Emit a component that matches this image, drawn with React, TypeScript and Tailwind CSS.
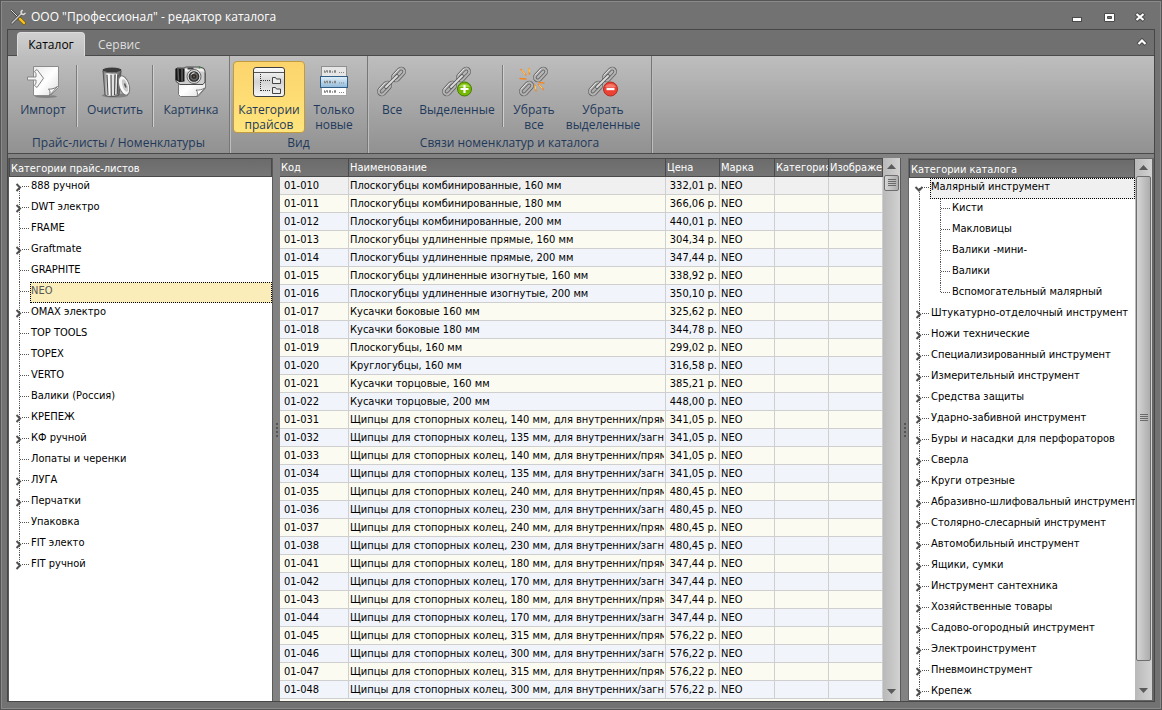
import { useState } from "react";
import type { ReactNode } from "react";

interface TreeItem {
  name: string;
  expandable?: boolean;
  children?: string[];
}

interface Product {
  code: string;
  name: string;
  price: string;
}

const priceLists: TreeItem[] = [
  { name: "888 ручной", expandable: true },
  { name: "DWT электро", expandable: true },
  { name: "FRAME" },
  { name: "Graftmate", expandable: true },
  { name: "GRAPHITE" },
  { name: "NEO" },
  { name: "OMAX электро", expandable: true },
  { name: "TOP TOOLS" },
  { name: "TOPEX" },
  { name: "VERTO" },
  { name: "Валики (Россия)" },
  { name: "КРЕПЕЖ", expandable: true },
  { name: "КФ ручной", expandable: true },
  { name: "Лопаты и черенки" },
  { name: "ЛУГА", expandable: true },
  { name: "Перчатки", expandable: true },
  { name: "Упаковка" },
  { name: "FIT электо", expandable: true },
  { name: "FIT ручной", expandable: true },
];

const catalog: TreeItem[] = [
  {
    name: "Малярный инструмент",
    expandable: true,
    children: ["Кисти", "Макловицы", "Валики -мини-", "Валики", "Вспомогательный малярный"],
  },
  { name: "Штукатурно-отделочный инструмент", expandable: true },
  { name: "Ножи технические", expandable: true },
  { name: "Специализированный инструмент", expandable: true },
  { name: "Измерительный инструмент", expandable: true },
  { name: "Средства защиты", expandable: true },
  { name: "Ударно-забивной инструмент", expandable: true },
  { name: "Буры и насадки для перфораторов", expandable: true },
  { name: "Сверла", expandable: true },
  { name: "Круги отрезные", expandable: true },
  { name: "Абразивно-шлифовальный инструмент", expandable: true },
  { name: "Столярно-слесарный инструмент", expandable: true },
  { name: "Автомобильный инструмент", expandable: true },
  { name: "Ящики, сумки", expandable: true },
  { name: "Инструмент сантехника", expandable: true },
  { name: "Хозяйственные товары", expandable: true },
  { name: "Садово-огородный инструмент", expandable: true },
  { name: "Электроинструмент", expandable: true },
  { name: "Пневмоинструмент", expandable: true },
  { name: "Крепеж", expandable: true },
];

const products: Product[] = [
  { code: "01-010", name: "Плоскогубцы комбинированные, 160 мм", price: "332,01 р." },
  { code: "01-011", name: "Плоскогубцы комбинированные, 180 мм", price: "366,06 р." },
  { code: "01-012", name: "Плоскогубцы комбинированные, 200 мм", price: "440,01 р." },
  { code: "01-013", name: "Плоскогубцы удлиненные прямые, 160 мм", price: "304,34 р." },
  { code: "01-014", name: "Плоскогубцы удлиненные прямые, 200 мм", price: "347,44 р." },
  { code: "01-015", name: "Плоскогубцы удлиненные изогнутые, 160 мм", price: "338,92 р." },
  { code: "01-016", name: "Плоскогубцы удлиненные изогнутые, 200 мм", price: "350,10 р." },
  { code: "01-017", name: "Кусачки боковые 160 мм", price: "325,62 р." },
  { code: "01-018", name: "Кусачки боковые 180 мм", price: "344,78 р." },
  { code: "01-019", name: "Плоскогубцы, 160 мм", price: "299,02 р." },
  { code: "01-020", name: "Круглогубцы, 160 мм", price: "316,58 р." },
  { code: "01-021", name: "Кусачки торцовые, 160 мм", price: "385,21 р." },
  { code: "01-022", name: "Кусачки торцовые, 200 мм", price: "448,00 р." },
  { code: "01-031", name: "Щипцы для стопорных колец, 140 мм, для внутренних/прямы", price: "341,05 р." },
  { code: "01-032", name: "Щипцы для стопорных колец, 135 мм, для внутренних/загнут", price: "341,05 р." },
  { code: "01-033", name: "Щипцы для стопорных колец, 140 мм, для внутренних/прямы", price: "341,05 р." },
  { code: "01-034", name: "Щипцы для стопорных колец, 135 мм, для внутренних/загнут", price: "341,05 р." },
  { code: "01-035", name: "Щипцы для стопорных колец, 240 мм, для внутренних/прямы", price: "480,45 р." },
  { code: "01-036", name: "Щипцы для стопорных колец, 230 мм, для внутренних/загнут", price: "480,45 р." },
  { code: "01-037", name: "Щипцы для стопорных колец, 240 мм, для внутренних/прямы", price: "480,45 р." },
  { code: "01-038", name: "Щипцы для стопорных колец, 230 мм, для внутренних/загнут", price: "480,45 р." },
  { code: "01-041", name: "Щипцы для стопорных колец, 180 мм, для внутренних/прямы", price: "347,44 р." },
  { code: "01-042", name: "Щипцы для стопорных колец, 170 мм, для внутренних/загнут", price: "347,44 р." },
  { code: "01-043", name: "Щипцы для стопорных колец, 180 мм, для внутренних/прямы", price: "347,44 р." },
  { code: "01-044", name: "Щипцы для стопорных колец, 170 мм, для внутренних/загнут", price: "347,44 р." },
  { code: "01-045", name: "Щипцы для стопорных колец, 315 мм, для внутренних/прямы", price: "576,22 р." },
  { code: "01-046", name: "Щипцы для стопорных колец, 300 мм, для внутренних/загнут", price: "576,22 р." },
  { code: "01-047", name: "Щипцы для стопорных колец, 315 мм, для внутренних/прямы", price: "576,22 р." },
  { code: "01-048", name: "Щипцы для стопорных колец, 300 мм, для внутренних/загнут", price: "576,22 р." },
];

/* Shared gradients for the ribbon icons */
function IconDefs() {
  return (
    <svg width="0" height="0" className="absolute" aria-hidden="true">
      <defs>
        <linearGradient id="paper" x1="0" y1="0" x2="1" y2="1">
          <stop offset="0" stopColor="#e9e9e9" />
          <stop offset="0.5" stopColor="#ffffff" />
          <stop offset="1" stopColor="#dcdcdc" />
        </linearGradient>
        <linearGradient id="metal" x1="0" y1="0" x2="1" y2="0">
          <stop offset="0" stopColor="#6a6a6a" />
          <stop offset="0.3" stopColor="#f2f2f2" />
          <stop offset="0.6" stopColor="#bdbdbd" />
          <stop offset="1" stopColor="#4c4c4c" />
        </linearGradient>
        <linearGradient id="panel" x1="0" y1="0" x2="0" y2="1">
          <stop offset="0" stopColor="#ffffff" />
          <stop offset="0.5" stopColor="#d4d4d4" />
          <stop offset="1" stopColor="#f6f6f6" />
        </linearGradient>
        <linearGradient id="blue" x1="0" y1="0" x2="0" y2="1">
          <stop offset="0" stopColor="#e4f1fa" />
          <stop offset="1" stopColor="#8fb9d8" />
        </linearGradient>
        <radialGradient id="lens">
          <stop offset="0" stopColor="#8a6a58" />
          <stop offset="0.3" stopColor="#202020" />
          <stop offset="0.6" stopColor="#6b6b6b" />
          <stop offset="1" stopColor="#141414" />
        </radialGradient>
      </defs>
    </svg>
  );
}

function ImportIcon() {
  return (
    <svg width="34" height="34" viewBox="0 0 34 34">
      <ellipse cx="20" cy="31.5" rx="11" ry="1.5" fill="#000" opacity="0.25" />
      <path d="M7.5 1.5h25v21l-8 8h-17z" fill="url(#paper)" stroke="#8c8c8c" />
      <path d="M23.5 30.5c1-3 .5-5-1-6.500 3 .5 6-.5 9-2.500z" fill="#f8f8f8" stroke="#777" />
      <path d="M1.500 12h8.500V8.500L8.500 6.500 11 4.500l6.500 8.700L11 22.500l-2.500-2L10 18v-3H1.500z" fill="#f7f7f7" stroke="#858585" />
    </svg>
  );
}

function TrashIcon() {
  return (
    <svg width="34" height="34" viewBox="0 0 34 34">
      <ellipse cx="17" cy="30.500" rx="13" ry="2" fill="#000" opacity="0.25" />
      <path d="M5 6h18l-2 24c-3 2-11.500 2-14 0z" fill="url(#metal)" stroke="#555" />
      <path d="M9 10l1 20M13 10l.3 21M17 10l-.5 20M20 10l-.8 19" stroke="#4a4a4a" />
      <path d="M11 9l.5 21M15 9v21M18.500 9l-.6 20" stroke="#fff" />
      <ellipse cx="14" cy="5" rx="10" ry="3" fill="#3b3b3b" stroke="#b5b5b5" />
      <path d="M4.500 6c4 2.500 15 2.500 19 0" stroke="#666" fill="none" />
      <ellipse cx="26" cy="20.500" rx="5" ry="10" fill="url(#paper)" stroke="#777" transform="rotate(-18 26 20.500)" />
      <ellipse cx="27" cy="20.500" rx="3" ry="7" fill="#c9c9c9" stroke="#f8f8f8" transform="rotate(-18 27 20.500)" />
      <path d="M26.500 18.500l1.500 4" stroke="#555" strokeWidth="1.500" />
    </svg>
  );
}

function CameraIcon() {
  return (
    <svg width="34" height="34" viewBox="0 0 34 34">
      <path d="M4.500 8h27v15l-7.500 8.500H6.500l-2-2z" fill="url(#paper)" stroke="#777" />
      <path d="M23 31.500c1-3 .5-5-1-6.500 3 .5 6-.5 9-2z" fill="#fff" stroke="#777" />
      <path d="M3 3h7l2-1h14l4 1.500 1 2.500v11l-2 2.500H6l-4-3V4z" fill="#cecece" stroke="#4b4b4b" />
      <path d="M1.500 3.500h9v13l-5 .5-4-2z" fill="#161616" />
      <path d="M4 4l.5 11.500M8 4v12" stroke="#5c5c5c" strokeWidth="1.500" />
      <path d="M11 4h17.500l2 2.500H11z" fill="#f0f0f0" />
      <rect x="13.500" y="2.500" width="6" height="2" fill="#444" />
      <circle cx="20" cy="11.500" r="7" fill="#dcdcdc" stroke="#666" />
      <circle cx="20" cy="11.500" r="5.300" fill="url(#lens)" />
      <path d="M17.500 9.500a3 3 0 0 1 3-1.700" stroke="#eee" fill="none" />
      <circle cx="25.500" cy="2.500" r="0.900" fill="#2c8c35" />
    </svg>
  );
}

function CategoriesIcon() {
  return (
    <svg width="34" height="34" viewBox="0 0 34 34">
      <rect x="1.500" y="2.500" width="31" height="29" rx="2.500" fill="url(#panel)" stroke="#3f3f3f" />
      <path d="M2 7.500h30" stroke="#555" />
      <path d="M8.500 9v17M9 15.500h10M9 25.500h10" fill="none" stroke="#333" strokeDasharray="1 1" />
      <path d="M20.500 12.500h3l1 1.500h4v4.500h-8zM20.500 22.500h3l1 1.500h4v4.500h-8z" fill="#ededed" stroke="#444" />
    </svg>
  );
}

function OnlyNewIcon() {
  return (
    <svg width="34" height="34" viewBox="0 0 34 34">
      <rect x="4.500" y="1.500" width="25" height="10" fill="#e6e6e6" stroke="#909090" />
      <rect x="4.500" y="22.500" width="25" height="8" fill="#fff" stroke="#a5a5a5" />
      <rect x="3.500" y="11.500" width="27" height="11" fill="url(#blue)" stroke="#315c85" />
      <g fill="none" stroke="#858585">
        <path d="M7 6h1m1 0h2m1 0h2m1 1h1m1-1h2M7 7h2m1 0h1m1 0h2m1 0h1m1 0h2" strokeWidth="1.400" />
        <path d="M7 16.500h1m1 0h2m1 0h2m1 1h1m1-1h2M7 17.500h2m1 0h1m1 0h2m1 0h1m1 0h2" strokeWidth="1.400" />
        <path d="M7 26h1m1 0h2m1 0h2m1 1h1m1-1h2M7 27h2m1 0h1m1 0h2m1 0h1m1 0h2" strokeWidth="1.400" />
        <path d="M22 7.500h1m1 0h1m1 0h1M22 18h1m1 0h1m1 0h1M22 27.500h1m1 0h1m1 0h1" />
      </g>
    </svg>
  );
}

type LinkKind = "all" | "add" | "broken" | "remove";

function ChainIcon({ kind }: { kind: LinkKind }) {
  return (
    <svg width="34" height="34" viewBox="0 0 34 34">
      <g fill="none" strokeLinecap="round">
        <g transform="rotate(-47 23.500 9.500)">
          <rect x="16.500" y="6.500" width="14" height="6" rx="3" stroke="#5e5e5e" strokeWidth="3.600" />
          <rect x="16.500" y="6.500" width="14" height="6" rx="3" stroke="#b4b4b4" strokeWidth="2" />
          <path d="M19.500 6h8" stroke="#ececec" strokeWidth="0.800" />
        </g>
        <g transform="rotate(-47 9.500 23.500)">
          <rect x="2.500" y="20.500" width="14" height="6" rx="3" stroke="#5e5e5e" strokeWidth="3.600" />
          <rect x="2.500" y="20.500" width="14" height="6" rx="3" stroke="#b4b4b4" strokeWidth="2" />
          <path d="M5.500 20h8" stroke="#ececec" strokeWidth="0.800" />
        </g>
        {kind !== "broken" && (
          <>
            <path d="M11 22L22 11" stroke="#555" strokeWidth="3.600" />
            <path d="M11 22L22 11" stroke="#dcdcdc" strokeWidth="2" />
          </>
        )}
        {kind === "broken" && (
          <>
            <path d="M4 4.500l5 5.500M12 3.500l.5 5.500M3 13.500l6 .5M18 20l1 6M21.500 19.500l5 5M22 17.500l5 .5" stroke="#f6851f" strokeWidth="1.400" />
            <path d="M5 5.500l3 3.500M12 4l.3 3M18.200 21l.5 3M22.500 20.500l2.500 2.500" stroke="#ffd65a" />
          </>
        )}
      </g>
      {kind === "add" && (
        <g>
          <circle cx="24.500" cy="24" r="7" fill="#76b900" stroke="#467c08" />
          <path d="M19 22a6 5 0 0 1 11 0z" fill="#a5d84a" />
          <path d="M24.500 20v8M20.500 24h8" stroke="#fff" strokeWidth="2.200" />
        </g>
      )}
      {kind === "remove" && (
        <g>
          <circle cx="24.500" cy="24" r="7" fill="#ea4335" stroke="#b32c20" />
          <path d="M19 22a6 5 0 0 1 11 0z" fill="#f47b6c" />
          <path d="M20.500 24h8" stroke="#fff" strokeWidth="2.400" />
        </g>
      )}
    </svg>
  );
}

function ToolsIcon() {
  return (
    <svg width="16" height="16" viewBox="0 0 16 16">
      <path d="M1 1l8 8" stroke="#3f3f3f" strokeWidth="2" />
      <path d="M1 1l8 8" stroke="#e0e0e0" />
      <path d="M2 14L12 4" stroke="#444" strokeWidth="2.600" strokeLinecap="round" />
      <path d="M2 14L12 4" stroke="#c9c9c9" strokeWidth="1.400" strokeLinecap="round" />
      <path d="M12.500 1l-1.500 2 .5 2 2 .5 2-1.500" fill="none" stroke="#dedede" strokeWidth="1.500" />
      <path d="M10 10l4 4" stroke="#7c5a0a" strokeWidth="3.600" strokeLinecap="round" />
      <path d="M10 10l4 4" stroke="#f7c51e" strokeWidth="2.400" strokeLinecap="round" />
    </svg>
  );
}

interface RibbonButtonProps {
  icon: ReactNode;
  label: string;
  width: string;
  active?: boolean;
  onClick?: () => void;
}

function RibbonButton({ icon, label, width, active, onClick }: RibbonButtonProps) {
  return (
    <button
      type="button"
      aria-pressed={active}
      onClick={onClick}
      className={`flex h-[72px] shrink-0 flex-col items-center rounded-sm border pt-[3px] text-[12px] leading-[15px] whitespace-pre-line ${width} ${
        active
          ? "border-[#c29b3f] bg-gradient-to-b from-[#fcd46c] to-[#ffe57c] text-[#1e395b]"
          : "border-transparent text-[#1e395b]"
      }`}
    >
      {icon}
      <span className="mt-[3px] text-center">{label}</span>
    </button>
  );
}

function RibbonDivider() {
  return <div className="mx-px mt-1 h-[62px] w-[2px] shrink-0 border-l border-[#7c7c7c] bg-[#cfcfcf]" />;
}

function RibbonGroup({ title, width, children }: { title: string; width: string; children: ReactNode }) {
  return (
    <section className={`flex shrink-0 flex-col border-r border-[#777] pt-[5px] shadow-[1px_0_0_#bdbdbd] ${width}`}>
      <div className="flex pl-[3px]">{children}</div>
      <h2 className="mt-[2px] text-center text-[12px] leading-[16px] text-[#1e395b]">{title}</h2>
    </section>
  );
}

function PanelHeader({ title }: { title: string }) {
  return (
    <h2 className="h-[19px] shrink-0 border border-[#4a4a4a] bg-gradient-to-b from-[#6b6b6b] to-[#767676] px-px text-[11px] leading-[19px] text-white">
      {title}
    </h2>
  );
}

function Scrollbar({ thumb }: { thumb: string }) {
  return (
    <div className="flex w-[17px] shrink-0 flex-col bg-gradient-to-r from-[#b9b9b9] to-[#d2d2d2]">
      <button type="button" aria-label="Вверх" className="flex h-[17px] shrink-0 items-center justify-center">
        <svg width="9" height="5" viewBox="0 0 9 5">
          <path d="M0 5l4.500-5L9 5z" fill="#5a5a5a" />
        </svg>
      </button>
      <div className="min-h-0 flex-1">
        <div
          className={`mx-px flex items-center justify-center rounded-xs border border-[#6e6e6e] bg-gradient-to-r from-[#d6d6d6] to-[#adadad] ${thumb}`}
        >
          <svg width="8" height="8" viewBox="0 0 8 8">
            <path d="M0 .5h8M0 2.500h8M0 4.500h8M0 6.500h8" stroke="#6a6a6a" />
          </svg>
        </div>
      </div>
      <button type="button" aria-label="Вниз" className="flex h-[19px] shrink-0 items-center justify-center">
        <svg width="9" height="5" viewBox="0 0 9 5">
          <path d="M0 0l4.500 5L9 0z" fill="#5a5a5a" />
        </svg>
      </button>
    </div>
  );
}

function Splitter() {
  return (
    <div className="flex w-[8px] shrink-0 items-center justify-center border-l border-[#5a5a5a] bg-[#828282]">
      <svg width="2" height="14" viewBox="0 0 2 14">
        <path d="M1 0v14" stroke="#555" strokeWidth="2" strokeDasharray="2 2" />
      </svg>
    </div>
  );
}

interface BranchProps {
  first?: boolean;
  last?: boolean;
  expandable?: boolean;
  open?: boolean;
}

/* Dotted connector lines with the expand arrow on top */
function Branch({ first, last, expandable, open }: BranchProps) {
  return (
    <svg width="21" height="21" viewBox="0 0 21 21" className="shrink-0" shapeRendering="crispEdges">
      <path
        d={`M10.500 ${first ? 10 : 0}V${last ? 10 : 21}M${expandable ? 13 : 11} 9.500H21`}
        fill="none"
        stroke="#555"
        strokeDasharray="1 1"
      />
      {expandable && (
        <path
          d={open ? "M6.500 9l3.500 3.500L13.500 9" : "M7.500 7l3.500 3.500L7.500 14"}
          fill="none"
          stroke="#505050"
          strokeWidth="2"
          shapeRendering="auto"
        />
      )}
    </svg>
  );
}

interface TreeProps {
  items: TreeItem[];
  selected: string;
  onSelect: (name: string) => void;
  selectedStyle: string;
  endless?: boolean;
}

function Tree({ items, selected, onSelect, selectedStyle, endless }: TreeProps) {
  const [closed, setClosed] = useState<string[]>([]);

  const toggle = (name: string) =>
    setClosed(closed.includes(name) ? closed.filter((n) => n !== name) : [...closed, name]);

  const labelClass = (name: string) =>
    `flex h-[21px] min-w-0 flex-1 items-start border border-dotted leading-[16px] whitespace-nowrap ${
      selected === name ? selectedStyle : "border-transparent"
    }`;

  return (
    <ul className="min-h-0 flex-1 overflow-hidden bg-white text-[11px] text-black">
      {items.map((item, i) => {
        const open = !!item.children && !closed.includes(item.name);
        const branch = (
          <Branch
            first={i === 0}
            last={!endless && i === items.length - 1}
            expandable={item.expandable}
            open={open}
          />
        );
        return (
          <li key={item.name}>
            <div className="flex h-[21px]">
              {item.expandable ? (
                <button type="button" aria-label={item.name} aria-expanded={open} onClick={() => toggle(item.name)}>
                  {branch}
                </button>
              ) : (
                branch
              )}
              <button type="button" className={labelClass(item.name)} onClick={() => onSelect(item.name)}>
                {item.name}
              </button>
            </div>
            {open && (
              <ul className="bg-[repeating-linear-gradient(to_bottom,#555_0_1px,transparent_1px_2px)] bg-[length:1px_100%] bg-[position:10px_0] bg-no-repeat pl-[21px]">
                {item.children!.map((child, n) => (
                  <li key={child} className="flex h-[21px]">
                    <Branch last={n === item.children!.length - 1} />
                    <button type="button" className={labelClass(child)} onClick={() => onSelect(child)}>
                      {child}
                    </button>
                  </li>
                ))}
              </ul>
            )}
          </li>
        );
      })}
    </ul>
  );
}

function ProductTable() {
  const [current, setCurrent] = useState("01-010");
  const headers = ["Код", "Наименование", "Цена", "Марка", "Категория", "Изображе"];
  const cell = "overflow-hidden border-r border-b border-[#cfcfcf] p-0 whitespace-nowrap";

  return (
    <div className="min-w-0 flex-1 overflow-hidden bg-[#fcfbf2]">
      <table className="w-full table-fixed border-separate border-spacing-0 text-[11px] text-black">
        <colgroup>
          <col className="w-[69px]" />
          <col />
          <col className="w-[54px]" />
          <col className="w-[55px]" />
          <col className="w-[54px]" />
          <col className="w-[54px]" />
        </colgroup>
        <thead>
          <tr className="bg-gradient-to-b from-[#6b6b6b] to-[#767676] text-left text-white">
            {headers.map((title) => (
              <th
                key={title}
                className="h-[19px] overflow-hidden border-y border-r border-[#4a4a4a] p-0 pl-px leading-[17px] font-normal whitespace-nowrap"
              >
                <div className="overflow-hidden">{title}</div>
              </th>
            ))}
          </tr>
        </thead>
        <tbody>
          {products.map((p) => (
            <tr
              key={p.code}
              onClick={() => setCurrent(p.code)}
              className={`h-[18px] leading-[17px] ${
                current === p.code ? "bg-[#f0f0f0]" : "odd:bg-[#f1f5fb] even:bg-[#fcfbf2]"
              }`}
            >
              <td className={`pl-1! ${cell}`}>{p.code}</td>
              <td className={`px-px! ${cell}`}>
                <div className="overflow-hidden">{p.name}</div>
              </td>
              <td className={`pr-[2px]! text-right ${cell}`}>{p.price}</td>
              <td className={`pl-px! ${cell}`}>NEO</td>
              <td className={cell} />
              <td className={cell} />
            </tr>
          ))}
        </tbody>
      </table>
    </div>
  );
}

export default function App() {
  const [tab, setTab] = useState("Каталог");
  const [showCategories, setShowCategories] = useState(true);
  const [priceList, setPriceList] = useState("NEO");
  const [category, setCategory] = useState("Малярный инструмент");

  return (
    <div className="flex h-screen flex-col overflow-hidden border border-[#555] bg-[#727272] px-[6px] pb-[7px] font-['DejaVu_Sans_Condensed','Liberation_Sans',sans-serif] shadow-[inset_1px_1px_0_#8a8a8a,inset_-1px_-1px_0_#8a8a8a]">
      <IconDefs />

      {/* Title bar */}
      <header className="flex h-[28px] shrink-0 items-center pt-[3px] pl-[3px] font-['Open_Sans','Noto_Sans',sans-serif]">
        <ToolsIcon />
        <h1 className="ml-[5px] flex-1 text-[12px] leading-[16px] text-white">ООО "Профессионал" - редактор каталога</h1>
        <div className="flex">
          <button type="button" aria-label="Свернуть" className="flex h-4 w-8 items-center justify-center">
            <svg width="12" height="12" viewBox="0 0 12 12">
              <rect x="1.500" y="6.500" width="9" height="4" fill="#fff" stroke="#4a4a4a" />
            </svg>
          </button>
          <button type="button" aria-label="Развернуть" className="flex h-4 w-8 items-center justify-center">
            <svg width="12" height="12" viewBox="0 0 12 12">
              <path d="M1.500 2.500h10v8h-10zM4.500 5.500h4v2h-4z" fill="#fff" fillRule="evenodd" stroke="#4a4a4a" />
            </svg>
          </button>
          <button type="button" aria-label="Закрыть" className="flex h-4 w-[30px] items-center justify-center">
            <svg width="12" height="12" viewBox="0 0 12 12">
              <path d="M2 2.500l8 7M10 2.500l-8 7" stroke="#4a4a4a" strokeWidth="4" />
              <path d="M2.500 3l7 6M9.500 3l-7 6" stroke="#fff" strokeWidth="2.200" />
            </svg>
          </button>
        </div>
      </header>

      <div className="flex min-h-0 flex-1 flex-col border border-[#474747]">
        {/* Tabs */}
        <nav className="flex h-[26px] shrink-0 items-end border-b border-[#4a4a4a] bg-[#707070] pl-[9px] font-['Open_Sans','Noto_Sans',sans-serif] text-[12px]">
          {["Каталог", "Сервис"].map((name) => (
            <button
              key={name}
              type="button"
              onClick={() => setTab(name)}
              className={`-mb-px h-[24px] w-[68px] rounded-t-sm border border-b-0 text-center ${
                tab === name
                  ? "border-[#dcdcdc] bg-gradient-to-b from-[#d0d0d0] to-[#bebebe] text-black"
                  : "border-transparent text-[#dedede]"
              }`}
            >
              {name}
            </button>
          ))}
          <button type="button" aria-label="Свернуть ленту" className="mr-[6px] mb-[8px] ml-auto">
            <svg width="12" height="10" viewBox="0 0 12 10">
              <path d="M2 7.500L6 3.500l4 4" fill="none" stroke="#4a4a4a" strokeWidth="4" />
              <path d="M2.500 7L6 3.500 9.500 7" fill="none" stroke="#fff" strokeWidth="2.200" />
            </svg>
          </button>
        </nav>

        {/* Ribbon */}
        <div className="flex h-[98px] shrink-0 border-b border-[#4a4a4a] bg-gradient-to-b from-[#bebebe] to-[#919191] font-['Open_Sans','Noto_Sans',sans-serif]">
          <RibbonGroup title="Прайс-листы / Номенклатуры" width="w-[222px]">
            <RibbonButton icon={<ImportIcon />} label="Импорт" width="w-[64px]" />
            <RibbonDivider />
            <RibbonButton icon={<TrashIcon />} label="Очистить" width="w-[72px]" />
            <RibbonDivider />
            <RibbonButton icon={<CameraIcon />} label="Картинка" width="w-[72px]" />
          </RibbonGroup>
          <RibbonGroup title="Вид" width="w-[138px]">
            <RibbonButton
              icon={<CategoriesIcon />}
              label={"Категории\nпрайсов"}
              width="w-[72px]"
              active={showCategories}
              onClick={() => setShowCategories(!showCategories)}
            />
            <RibbonButton icon={<OnlyNewIcon />} label={"Только\nновые"} width="w-[58px]" />
          </RibbonGroup>
          <RibbonGroup title="Связи номенклатур и каталога" width="w-[284px]">
            <RibbonButton icon={<ChainIcon kind="all" />} label="Все" width="w-[42px]" />
            <RibbonButton icon={<ChainIcon kind="add" />} label="Выделенные" width="w-[88px]" />
            <RibbonDivider />
            <RibbonButton icon={<ChainIcon kind="broken" />} label={"Убрать\nвсе"} width="w-[58px]" />
            <RibbonButton icon={<ChainIcon kind="remove" />} label={"Убрать\nвыделенные"} width="w-[80px]" />
          </RibbonGroup>
        </div>

        {/* Work area */}
        <main className="flex min-h-0 flex-1 bg-[#828282] pt-1">
          {showCategories && (
            <>
              <aside className="flex w-[264px] shrink-0 flex-col border-l border-[#5a5a5a]">
                <PanelHeader title="Категории прайс-листов" />
                <Tree
                  items={priceLists}
                  selected={priceList}
                  onSelect={setPriceList}
                  selectedStyle="border-black bg-[#fbedb9] text-[#555]"
                />
              </aside>
              <Splitter />
            </>
          )}

          <div className="flex min-w-0 flex-1">
            <ProductTable />
            <Scrollbar thumb="h-4" />
          </div>

          <Splitter />
          <aside className="flex w-[246px] shrink-0 border border-r-2 border-[#666]">
            <div className="flex min-w-0 flex-1 flex-col">
              <PanelHeader title="Категории каталога" />
              <Tree
                items={catalog}
                selected={category}
                onSelect={setCategory}
                selectedStyle="border-black bg-[#f0f0f0] text-black"
                endless
              />
            </div>
            <Scrollbar thumb="h-[96%]" />
          </aside>
        </main>
      </div>
    </div>
  );
}
